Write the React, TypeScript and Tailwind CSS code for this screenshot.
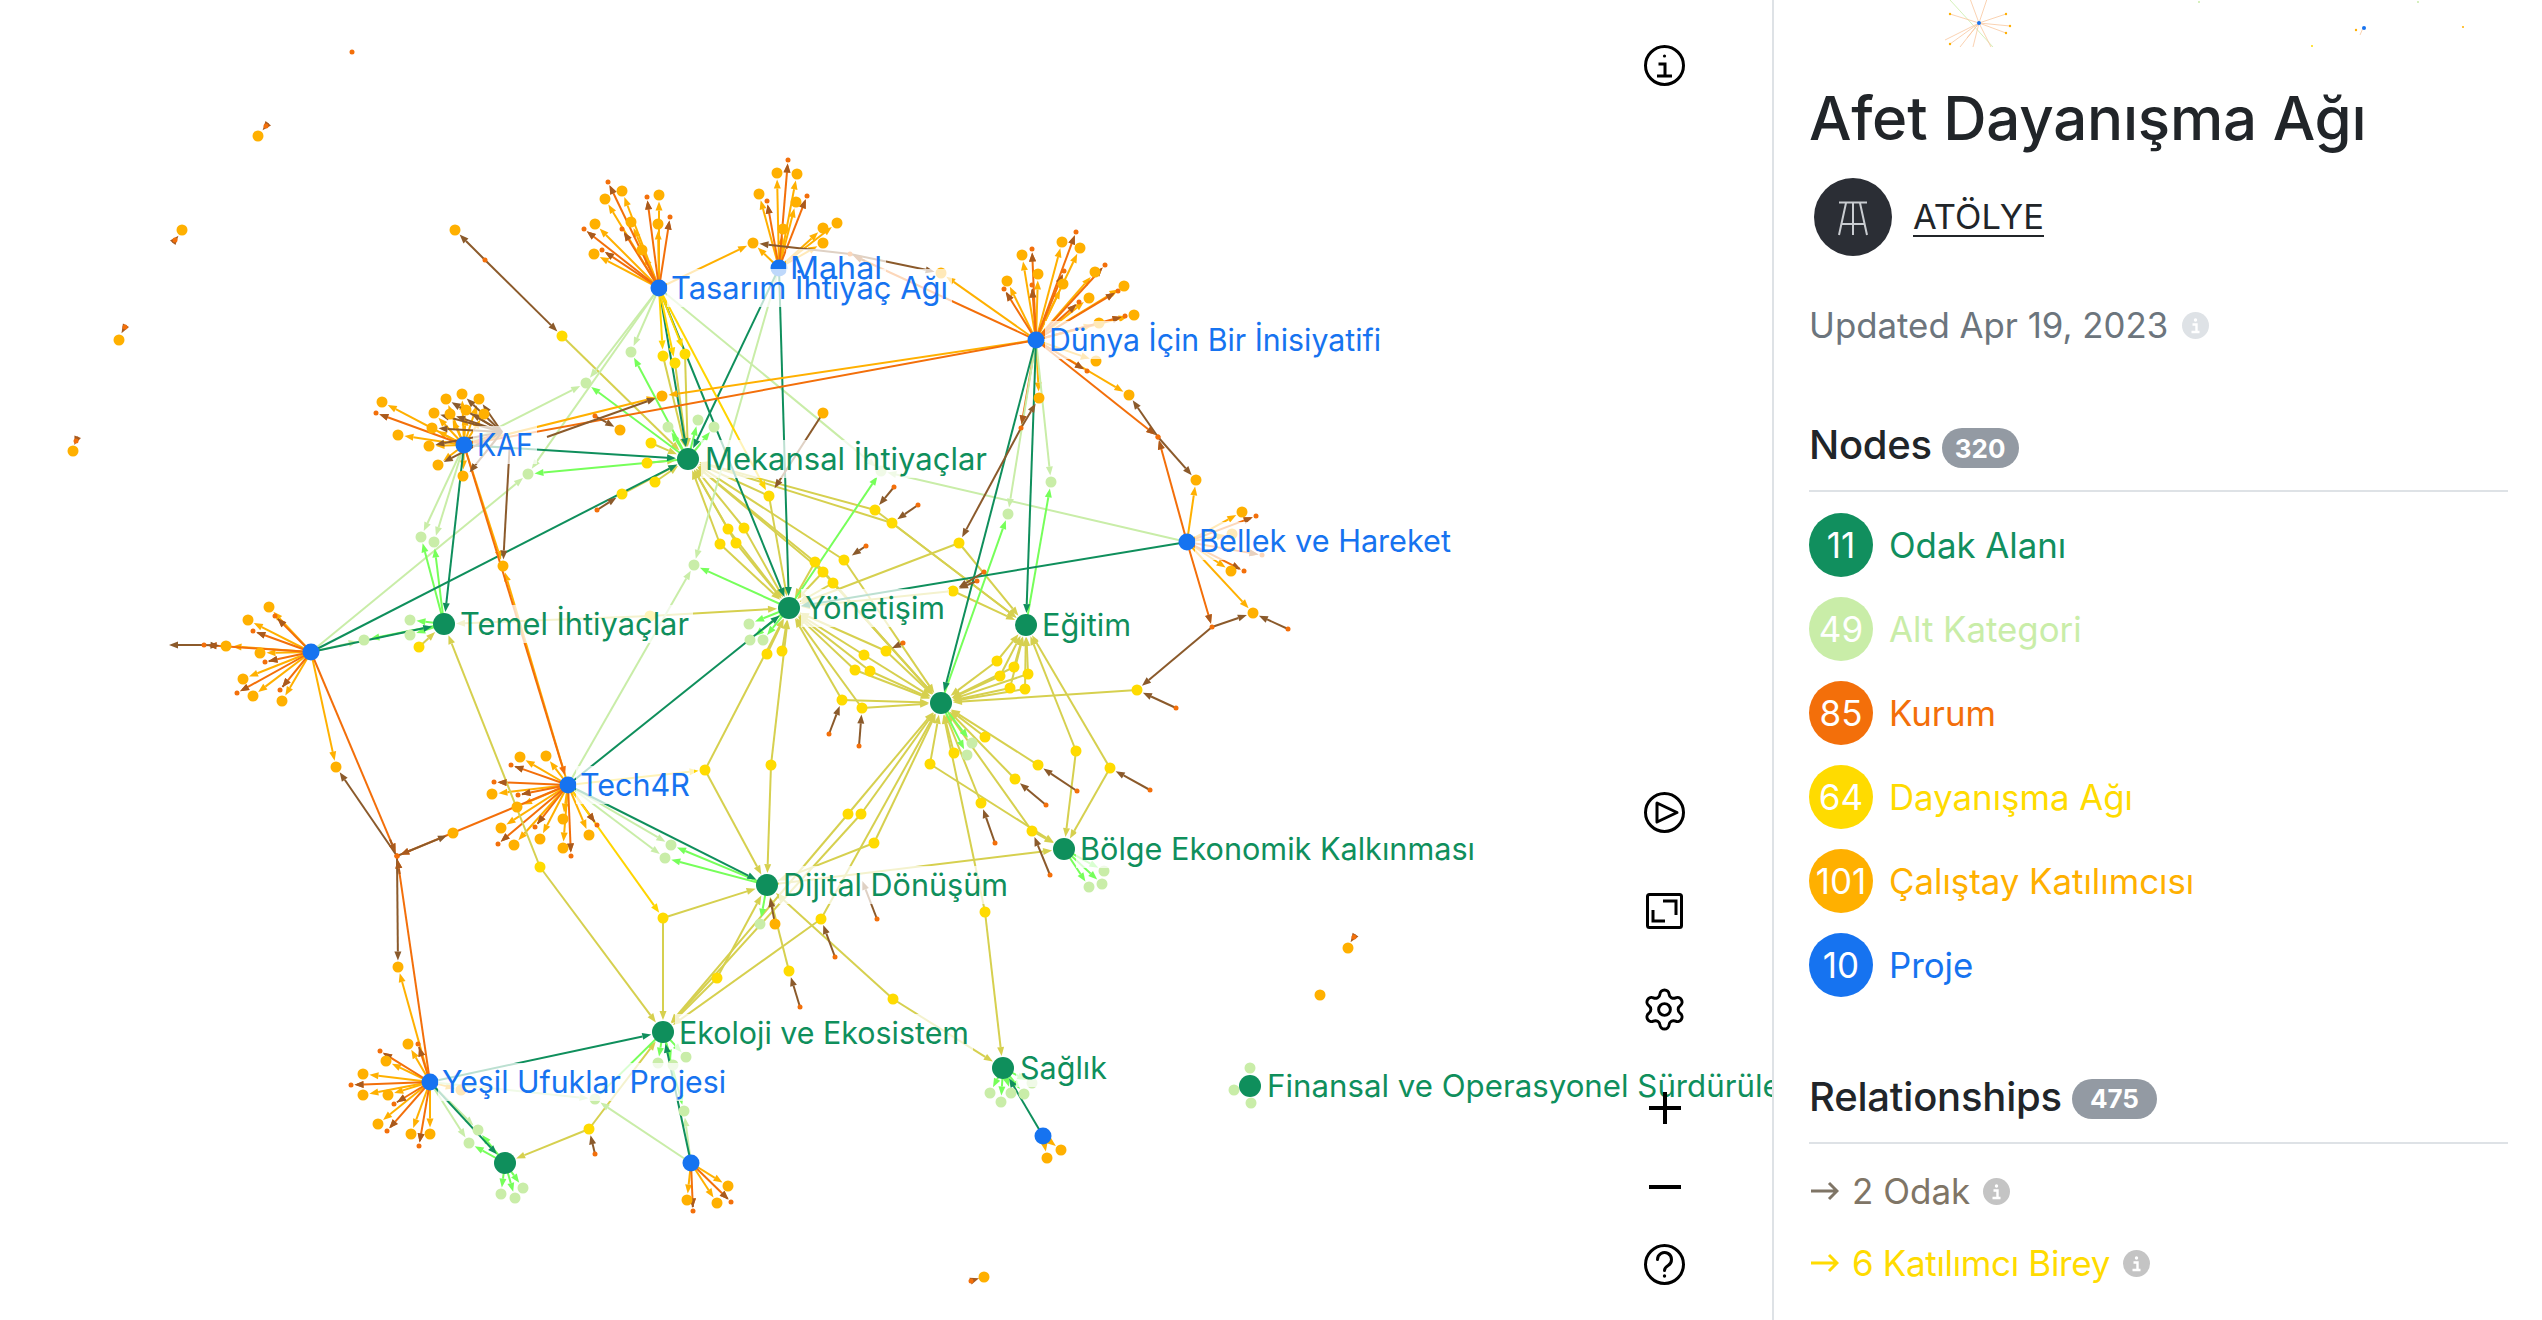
import React from "react";
import { Settings } from "lucide-react";

type P = [number, number];

const AMBER = "#ffb000";
const ORANGE = "#f36f0a";
const BROWN = "#8b5a2b";
const TIP = "#a85a1e";
const DARK = "#0f8f5c";
const LIGHT = "#c9eda8";
const BRIGHT = "#76ff5a";
const OLIVE = "#d6d04f";
const YELLOW = "#ffd500";
const BLUE = "#1673f0";

// hubs
const T: P = [659, 288];
const M: P = [779, 268];
const K: P = [464, 445];
const Mk: P = [688, 459];
const Te: P = [444, 624];
const L: P = [311, 652];
const Y: P = [789, 608];
const D: P = [1036, 340];
const B: P = [1187, 542];
const Eg: P = [1026, 625];
const C: P = [941, 703];
const Tc: P = [568, 785];
const Dj: P = [767, 885];
const Bo: P = [1064, 849];
const Ek: P = [663, 1032];
const Ye: P = [430, 1082];
const G2: P = [505, 1163];
const Bl2: P = [691, 1163];
const Sa: P = [1003, 1068];
const Bl3: P = [1043, 1136];
const Fin: P = [1250, 1086];

const blueHubs: P[] = [T, M, K, L, D, B, Tc, Ye, Bl2, Bl3];
const greenHubs: P[] = [Mk, Te, Y, Eg, C, Dj, Bo, Ek, G2, Sa, Fin];

const stars: { hub: P; amber: P[]; tiny: P[] }[] = [
  { hub: T, amber: [[594, 254], [595, 224], [605, 199], [622, 191], [631, 222], [659, 195], [658, 224], [642, 250]], tiny: [[608, 182], [584, 229], [647, 197], [670, 217], [602, 250], [622, 229]] },
  { hub: M, amber: [[753, 243], [759, 194], [777, 173], [797, 174], [796, 202], [783, 229], [823, 228], [837, 223], [823, 243]], tiny: [[788, 160], [767, 201], [807, 196]] },
  { hub: K, amber: [[382, 402], [398, 435], [429, 446], [438, 465], [463, 476], [434, 413], [450, 414], [446, 399], [462, 394], [479, 399], [484, 414], [466, 410], [432, 428]], tiny: [[376, 413]] },
  { hub: L, amber: [[269, 607], [248, 620], [226, 646], [260, 653], [243, 679], [253, 696], [282, 701], [336, 767]], tiny: [[253, 631], [204, 645], [265, 662], [237, 693], [280, 690], [275, 616], [397, 856]] },
  { hub: D, amber: [[1022, 255], [1007, 281], [1038, 274], [1062, 242], [1080, 248], [1063, 284], [1095, 272], [1089, 298], [1124, 286], [1134, 315], [1099, 323], [1096, 361], [1129, 395], [1039, 398]], tiny: [[1032, 249], [1004, 289], [1076, 232], [1032, 285], [1064, 271], [1105, 265], [1079, 302], [1118, 291], [1125, 316], [1087, 371], [1021, 428], [1158, 437], [850, 254]] },
  { hub: B, amber: [[1242, 512], [1232, 534], [1231, 571], [1253, 613], [1196, 480]], tiny: [[1256, 516], [1262, 555], [1244, 571], [1212, 627], [1158, 437]] },
  { hub: Tc, amber: [[520, 757], [546, 756], [492, 794], [517, 807], [501, 828], [514, 845], [540, 839], [563, 819], [563, 848], [589, 835]], tiny: [[511, 765], [494, 782], [518, 795], [498, 844], [535, 827], [571, 856], [597, 825], [397, 856]] },
  { hub: Ye, amber: [[408, 1044], [386, 1061], [363, 1074], [363, 1095], [388, 1095], [378, 1124], [411, 1134], [430, 1134], [461, 1090], [398, 967]], tiny: [[418, 1044], [380, 1051], [351, 1085], [394, 1104], [387, 1131], [419, 1146], [397, 856]] },
  { hub: Bl2, amber: [[728, 1186], [717, 1203], [687, 1200]], tiny: [[731, 1202], [693, 1211]] },
  { hub: Bl3, amber: [[1061, 1150], [1047, 1158]], tiny: [] },
];

// amber nodes that only hang off another link
const extraAmber: P[] = [[455, 230], [662, 396], [620, 430], [823, 413], [503, 566], [453, 833], [775, 924], [258, 136], [182, 230], [119, 340], [73, 451], [1348, 948], [1320, 995], [984, 1277], [941, 273]];
const extraTiny: P[] = [[485, 260], [595, 416], [597, 510], [266, 126], [175, 240], [125, 327], [76, 441], [352, 52], [1354, 937], [971, 1281], [1288, 629], [1176, 708], [894, 487], [918, 505], [903, 643], [984, 572], [977, 581], [866, 546], [1077, 791], [1046, 805], [1150, 790], [995, 843], [1050, 875], [859, 746], [829, 734], [800, 1007], [835, 957], [877, 919], [595, 1154]];

const yellows: [P, P[]][] = [
  [[562, 336], [Mk]],
  [[651, 443], [Mk]],
  [[647, 463], [Mk]],
  [[655, 482], [Mk]],
  [[622, 494], [Mk]],
  [[663, 356], [Mk]],
  [[675, 363], [Mk]],
  [[685, 354], [Mk]],
  [[769, 496], [Mk, Y]],
  [[728, 529], [Mk, Y]],
  [[744, 528], [Mk, Y]],
  [[720, 544], [Mk, Y]],
  [[736, 543], [Mk, Y]],
  [[815, 562], [Mk, Y, C]],
  [[823, 572], [Mk, Y, C]],
  [[833, 583], [Y, C]],
  [[844, 560], [Mk, C]],
  [[875, 510], [Mk, Eg]],
  [[892, 523], [Mk, Eg]],
  [[959, 543], [Y, Eg]],
  [[953, 591], [Y, Eg]],
  [[886, 651], [Y, C]],
  [[864, 655], [Y, C]],
  [[855, 670], [Y, C]],
  [[870, 671], [Y, C]],
  [[842, 700], [Y, C]],
  [[862, 708], [Y, C]],
  [[997, 661], [C, Eg]],
  [[1014, 667], [C, Eg]],
  [[1028, 674], [C, Eg]],
  [[1000, 676], [C, Eg]],
  [[1010, 688], [C, Eg]],
  [[1025, 689], [C, Eg]],
  [[1137, 690], [C]],
  [[1076, 751], [Eg, Bo]],
  [[1110, 768], [Eg, Bo]],
  [[985, 737], [C]],
  [[954, 753], [C]],
  [[930, 764], [C, Bo]],
  [[1038, 765], [C]],
  [[1015, 779], [C]],
  [[981, 803], [C]],
  [[1032, 831], [C, Bo]],
  [[985, 912], [C, Sa]],
  [[893, 999], [Dj, Sa]],
  [[767, 654], [Y]],
  [[782, 651], [Y]],
  [[771, 765], [Y, Dj]],
  [[705, 770], [Y, Dj]],
  [[650, 616], [Te, Y]],
  [[663, 918], [Dj, Ek]],
  [[540, 867], [Te, Ek]],
  [[419, 647], [Te]],
  [[717, 978], [Dj, Ek]],
  [[789, 971], [Dj]],
  [[821, 919], [Ek, C]],
  [[848, 814], [Ek, C]],
  [[861, 814], [Ek, C]],
  [[874, 843], [Dj, C]],
  [[589, 1129], [G2, Ek]],
];

const lights: [P, P[], P[]][] = [
  [[631, 352], [T], [Mk]],
  [[586, 383], [K, T], [Mk]],
  [[668, 427], [], [Mk]],
  [[698, 420], [], [Mk]],
  [[714, 427], [], [Mk]],
  [[528, 474], [T, L], [Mk]],
  [[421, 537], [K], [Te]],
  [[434, 542], [K], [Te]],
  [[364, 640], [L], [Te]],
  [[410, 620], [], [Te]],
  [[410, 635], [], [Te]],
  [[694, 565], [M, Tc], [Y]],
  [[881, 471], [B, T], [Y]],
  [[749, 624], [], [Y]],
  [[750, 640], [], [Y]],
  [[763, 640], [], [Y]],
  [[1051, 482], [D], [Eg]],
  [[1008, 514], [D], [C]],
  [[972, 743], [], [C]],
  [[967, 755], [], [C]],
  [[671, 845], [Tc], [Dj]],
  [[665, 858], [Tc], [Dj]],
  [[760, 924], [], [Dj]],
  [[686, 1057], [], [Ek]],
  [[658, 1063], [], [Ek]],
  [[673, 1065], [], [Ek]],
  [[684, 1111], [Bl2], [Ek]],
  [[595, 1099], [Ye, Bl2], [Ek]],
  [[478, 1130], [Ye], [G2]],
  [[469, 1143], [Ye], [G2]],
  [[501, 1194], [], [G2]],
  [[515, 1198], [], [G2]],
  [[523, 1188], [], [G2]],
  [[1104, 871], [], [Bo]],
  [[1102, 884], [], [Bo]],
  [[1089, 887], [], [Bo]],
  [[990, 1093], [], [Sa]],
  [[1011, 1093], [], [Sa]],
  [[1024, 1094], [], [Sa]],
  [[1001, 1102], [], [Sa]],
  [[1032, 1083], [], [Sa]],
  [[1250, 1068], [], [Fin]],
  [[1251, 1103], [], [Fin]],
  [[1234, 1090], [], [Fin]],
];

const straight: [P, P, string][] = [
  // project -> focus
  [T, Mk, DARK], [T, Y, DARK], [M, Mk, DARK], [M, Y, DARK], [K, Mk, DARK], [K, Te, DARK], [L, Mk, DARK], [L, Te, DARK],
  [D, C, DARK], [D, Eg, DARK], [B, Y, DARK], [Tc, Y, DARK], [Tc, Dj, DARK], [Ye, Ek, DARK], [Ye, G2, DARK], [Bl2, Ek, DARK], [Bl3, Sa, DARK],
  // project -> network / participant
  [T, [663, 356], YELLOW], [T, [675, 363], YELLOW], [T, [685, 354], YELLOW], [T, [769, 496], YELLOW],
  [T, [753, 243], AMBER], [D, [941, 273], AMBER], [D, [662, 396], AMBER], [K, [662, 396], AMBER],
  [K, [503, 566], AMBER], [Tc, [503, 566], AMBER], [Tc, [663, 918], YELLOW], [Tc, [705, 770], YELLOW],
  [D, K, ORANGE], [K, Tc, ORANGE], [Dj, Bo, OLIVE],
  // tiny connectors
  [[485, 260], [455, 230], BROWN], [[485, 260], [562, 336], BROWN],
  [K, [502, 432], ORANGE],
  [[502, 432], [446, 399], BROWN], [[502, 432], [462, 394], BROWN], [[502, 432], [479, 399], BROWN], [[502, 432], [434, 413], BROWN], [[502, 432], [450, 414], BROWN],
  [[502, 432], [466, 410], BROWN], [[502, 432], [432, 428], BROWN], [[502, 432], [429, 446], BROWN], [[502, 432], [438, 465], BROWN], [[502, 432], [469, 473], BROWN],
  [[547, 437], [662, 396], BROWN], [[595, 416], [620, 430], BROWN], [[597, 510], [622, 494], BROWN],
  [[510, 440], [503, 566], BROWN], [[823, 413], [774, 489], BROWN],
  [[850, 254], [753, 243], BROWN], [[850, 254], [941, 273], BROWN],
  [[1021, 428], [1039, 398], BROWN], [[1021, 428], [959, 543], BROWN],
  [[1158, 437], [1129, 395], BROWN], [[1158, 437], [1196, 480], BROWN],
  [[1212, 627], [1253, 613], BROWN], [[1212, 627], [1137, 690], BROWN], [[1288, 629], [1253, 613], BROWN], [[1176, 708], [1137, 690], BROWN],
  [[397, 856], [336, 767], BROWN], [[397, 856], [453, 833], BROWN], [[397, 856], [398, 967], BROWN],
  [[204, 645], [168, 645], BROWN], [[204, 645], [226, 646], BROWN],
  [[894, 487], [875, 510], BROWN], [[918, 505], [892, 523], BROWN], [[903, 643], [886, 651], BROWN], [[984, 572], [953, 591], BROWN], [[977, 581], [953, 591], BROWN], [[866, 546], [851, 556], BROWN],
  [[1077, 791], [1038, 765], BROWN], [[1046, 805], [1015, 779], BROWN], [[1150, 790], [1110, 768], BROWN], [[995, 843], [981, 803], BROWN], [[1050, 875], [1032, 831], BROWN],
  [[859, 746], [862, 708], BROWN], [[829, 734], [842, 700], BROWN], [[800, 1007], [789, 971], BROWN], [[835, 957], [821, 919], BROWN], [[877, 919], [862, 880], BROWN], [[775, 924], [770, 897], BROWN],
  [[595, 1154], [589, 1129], BROWN],
  [[266, 126], [262, 131], TIP], [[175, 240], [179, 235], TIP], [[125, 327], [121, 334], TIP], [[76, 441], [74, 446], TIP], [[1354, 937], [1350, 943], TIP], [[971, 1281], [980, 1278], TIP],
];

const labels: [string, number, number, number, string][] = [
  ["Tasarım İhtiyaç Ağı", 671, 288, 277, BLUE],
  ["Mahal", 790, 268, 92, BLUE],
  ["KAF", 477, 445, 56, BLUE],
  ["Mekansal İhtiyaçlar", 705, 459, 282, DARK],
  ["Temel İhtiyaçlar", 460, 624, 229, DARK],
  ["Yönetişim", 805, 608, 140, DARK],
  ["Dünya İçin Bir İnisiyatifi", 1049, 340, 332, BLUE],
  ["Bellek ve Hareket", 1199, 541, 252, BLUE],
  ["Eğitim", 1042, 625, 89, DARK],
  ["Tech4R", 580, 785, 110, BLUE],
  ["Dijital Dönüşüm", 783, 885, 225, DARK],
  ["Bölge Ekonomik Kalkınması", 1080, 849, 395, DARK],
  ["Ekoloji ve Ekosistem", 679, 1033, 290, DARK],
  ["Yeşil Ufuklar Projesi", 442, 1082, 284, BLUE],
  ["Sağlık", 1020, 1068, 87, DARK],
  ["Finansal ve Operasyonel Sürdürülebilirlik", 1267, 1086, 600, DARK],
];

const key = (p: P) => `${p[0]},${p[1]}`;
const radius = new Map<string, number>();
blueHubs.forEach((p) => radius.set(key(p), 9));
greenHubs.forEach((p) => radius.set(key(p), 11));
stars.forEach((s) => {
  s.amber.forEach((p) => radius.set(key(p), 5.5));
  s.tiny.forEach((p) => radius.set(key(p), 2.5));
});
extraAmber.forEach((p) => radius.set(key(p), 5.5));
extraTiny.forEach((p) => radius.set(key(p), 2.5));
yellows.forEach(([p]) => radius.set(key(p), 5.5));
lights.forEach(([p]) => radius.set(key(p), 5.5));

function Edge({ from, to, color }: { from: P; to: P; color: string }) {
  const dx = to[0] - from[0];
  const dy = to[1] - from[1];
  const len = Math.hypot(dx, dy) || 1;
  const ux = dx / len;
  const uy = dy / len;
  const gap = (radius.get(key(to)) ?? 0) + 1;
  const tx = to[0] - ux * gap;
  const ty = to[1] - uy * gap;
  const bx = tx - ux * 9;
  const by = ty - uy * 9;
  const arrow = `${tx},${ty} ${bx - uy * 3.5},${by + ux * 3.5} ${bx + uy * 3.5},${by - ux * 3.5}`;
  return (
    <g>
      <line x1={from[0]} y1={from[1]} x2={bx} y2={by} stroke={color} strokeWidth={2} />
      <polygon points={arrow} fill={color} />
    </g>
  );
}

function Graph() {
  const all: [P, P, string][] = [];
  stars.forEach((s) => {
    s.amber.forEach((p) => all.push([s.hub, p, AMBER]));
    s.tiny.forEach((p) => all.push([s.hub, p, ORANGE]));
  });
  yellows.forEach(([p, targets]) => targets.forEach((t) => all.push([p, t, OLIVE])));
  lights.forEach(([p, light, bright]) => {
    light.forEach((f) => all.push([f, p, LIGHT]));
    bright.forEach((f) => all.push([f, p, BRIGHT]));
  });
  all.push(...straight);

  const tipArrows: [P, P][] = [];
  stars.forEach((s) => s.tiny.forEach((p) => tipArrows.push([s.hub, p])));

  return (
    <svg className="absolute left-0 top-0" width={1772} height={1320} viewBox="0 0 1772 1320">
      {all.map(([a, b, c], i) => (
        <Edge key={i} from={a} to={b} color={c} />
      ))}
      {tipArrows.map(([a, b], i) => (
        <Edge key={i} from={[b[0] - (b[0] - a[0]) * 0.08, b[1] - (b[1] - a[1]) * 0.08]} to={b} color={TIP} />
      ))}
      {extraTiny.concat(stars.flatMap((s) => s.tiny)).map((p, i) => (
        <circle key={i} cx={p[0]} cy={p[1]} r={2.5} fill={ORANGE} />
      ))}
      {extraAmber.concat(stars.flatMap((s) => s.amber)).map((p, i) => (
        <circle key={i} cx={p[0]} cy={p[1]} r={5.5} fill={AMBER} />
      ))}
      {yellows.map(([p], i) => (
        <circle key={i} cx={p[0]} cy={p[1]} r={5.5} fill="#ffdb00" />
      ))}
      {lights.map(([p], i) => (
        <circle key={i} cx={p[0]} cy={p[1]} r={5.5} fill={LIGHT} />
      ))}
      {blueHubs.map((p, i) => (
        <circle key={i} cx={p[0]} cy={p[1]} r={8.5} fill={BLUE} />
      ))}
      {greenHubs.map((p, i) => (
        <circle key={i} cx={p[0]} cy={p[1]} r={11} fill={DARK} />
      ))}
      {labels.map(([t, x, y, w], i) => (
        <rect key={i} x={x - 4} y={y - 19} width={w + 8} height={38} fill="white" fillOpacity={0.72} />
      ))}
      {labels.map(([t, x, y, w, c], i) => (
        <text
          key={i}
          x={x}
          y={y + 11}
          fill={c}
          fontSize={31}
          fontFamily="Inter, sans-serif"
          textLength={w}
          lengthAdjust="spacingAndGlyphs"
        >
          {t}
        </text>
      ))}
    </svg>
  );
}

function CircleIcon({ children }: { children: React.ReactNode }) {
  return (
    <svg width={41} height={41} viewBox="0 0 41 41" fill="none" stroke="black" strokeWidth={3} strokeLinecap="round" strokeLinejoin="round">
      <circle cx={20.5} cy={20.5} r={19} />
      {children}
    </svg>
  );
}

function Toolbar() {
  return (
    <div className="relative mr-[87px] flex h-full w-[41px] flex-col items-center pt-[45px] pb-[35px]">
      <CircleIcon>
        <path d="M16 19h5v11M14.5 31h12" strokeLinecap="square" strokeLinejoin="miter" />
        <circle cx={20.5} cy={11} r={1.6} fill="black" stroke="none" />
      </CircleIcon>
      <div className="mt-auto flex flex-col items-center gap-[60px]">
        <CircleIcon>
          <path d="M13 11l20 9.5L13 30z" />
        </CircleIcon>
        <svg width={37} height={36} viewBox="0 0 37 36" fill="none" stroke="black" strokeWidth={3}>
          <rect x={1.5} y={1.5} width={34} height={33} rx={2} />
          <path d="M17 8h13v14M7 17v11h12" />
        </svg>
        <Settings size={47} strokeWidth={1.5} color="black" className="-my-[3px]" />
      </div>
      <div className="mt-[62px] flex flex-col items-center">
        <svg width={32} height={32} viewBox="0 0 32 32" fill="none" stroke="black" strokeWidth={4} className="mb-[47px]">
          <path d="M0 16h32M16 0v32" />
        </svg>
        <svg width={32} height={32} viewBox="0 0 32 32" fill="none" stroke="black" strokeWidth={4} className="mb-[41px]">
          <path d="M0 16h32" />
        </svg>
        <CircleIcon>
          <path d="M13.5 15.5a7 7 0 1 1 10.6 6c-2.2 1.4-3.6 2.5-3.6 5" />
          <circle cx={20.5} cy={32} r={1.7} fill="black" stroke="none" />
        </CircleIcon>
      </div>
    </div>
  );
}

function InfoDot({ color }: { color: string }) {
  return (
    <svg width={27} height={27} viewBox="0 0 27 27" className="shrink-0">
      <circle cx={13.5} cy={13.5} r={13.5} fill={color} />
      <path d="M10.5 12.5h4v7M9.5 20h8" stroke="white" strokeWidth={2.4} fill="none" />
      <circle cx={13.5} cy={8} r={1.7} fill="white" />
    </svg>
  );
}

function Thumbnail() {
  const hub: P = [205, 23];
  const spokes: P[] = [[176, 14], [176, 44], [232, 14], [236, 26], [232, 33], [193, 38], [171, 40], [195, -4], [214, -4], [217, 47], [199, 47], [186, 47]];
  return (
    <svg width={767} height={47} viewBox="0 0 767 47" className="block">
      <line x1={176} y1={0} x2={219} y2={47} stroke="#c9eda8" strokeWidth={0.8} />
      {spokes.map((p, i) => (
        <line key={i} x1={hub[0]} y1={hub[1]} x2={p[0]} y2={p[1]} stroke="#f9c79e" strokeWidth={0.8} />
      ))}
      {spokes.slice(0, 5).map((p, i) => (
        <circle key={i} cx={p[0]} cy={p[1]} r={1.2} fill={AMBER} />
      ))}
      <circle cx={205} cy={23} r={2} fill={BLUE} />
      <line x1={589} y1={28} x2={586} y2={35} stroke="#f9c79e" strokeWidth={0.8} />
      <circle cx={590} cy={28} r={2} fill={BLUE} />
      <circle cx={582} cy={30} r={1.2} fill={AMBER} />
      <circle cx={689} cy={27} r={1} fill={AMBER} />
      <circle cx={538} cy={46} r={1} fill="#ffdb00" />
      <circle cx={425} cy={2} r={1} fill={LIGHT} />
      <circle cx={644} cy={2} r={1} fill={LIGHT} />
    </svg>
  );
}

function Badge({ n, w }: { n: number; w: string }) {
  return <span className={`flex h-[40px] items-center justify-center rounded-full bg-[#939aa3] text-[26px] font-bold text-white ${w}`}>{n}</span>;
}

const types: [number, string, string, string][] = [
  [11, "Odak Alanı", "bg-[#118f5e]", "text-[#118f5e]"],
  [49, "Alt Kategori", "bg-[#c9eda8]", "text-[#c9eda8]"],
  [85, "Kurum", "bg-[#f36f0a]", "text-[#f36f0a]"],
  [64, "Dayanışma Ağı", "bg-[#ffdb00]", "text-[#ffdb00]"],
  [101, "Çalıştay Katılımcısı", "bg-[#ffb000]", "text-[#ffb000]"],
  [10, "Proje", "bg-[#1673f0]", "text-[#1673f0]"],
];

function RelArrow({ color }: { color: string }) {
  return (
    <svg width={30} height={20} viewBox="0 0 30 20" fill="none" stroke={color} strokeWidth={3} className="shrink-0">
      <path d="M2 10h26M20 2l8 8-8 8" />
    </svg>
  );
}

function Sidebar() {
  return (
    <aside className="h-full w-[770px] shrink-0 overflow-hidden border-l-2 border-[#dee2e6] bg-white">
      <Thumbnail />
      <div className="pl-[35px] pr-[34px]">
        <h1 className="mt-[35px] text-[60px] font-medium leading-[72px] tracking-[-0.2px] text-[#212529]">Afet Dayanışma Ağı</h1>
        <div className="mt-[24px] flex items-center gap-[21px] pl-[5px]">
          <div className="h-[78px] w-[78px] shrink-0 rounded-full bg-[#2b2e35]">
            <svg width={78} height={78} viewBox="0 0 78 78" fill="none" stroke="#c9ccd1" strokeWidth={2}>
              <path d="M25 24.5h28M32 25l-7 32M46 25l7 32M39 25v32M27 46h24" />
            </svg>
          </div>
          <a className="text-[34.5px] leading-[42px] text-[#212529] underline decoration-2 underline-offset-[6px]">ATÖLYE</a>
        </div>
        <div className="mt-[47px] flex items-center gap-[14px] text-[34.8px] leading-[44px] text-[#6c757d]">
          <span>Updated Apr 19, 2023</span>
          <InfoDot color="#dee2e6" />
        </div>

        <div className="mt-[74px] flex items-center gap-[10px] border-b-2 border-[#dee2e6] pb-[21px]">
          <h2 className="text-[40px] font-medium leading-[48px] tracking-[-0.3px] text-[#212529]">Nodes</h2>
          <div className="mt-[6px]">
            <Badge n={320} w="w-[77px]" />
          </div>
        </div>
        <ul className="mt-[21px] flex flex-col gap-[20px]">
          {types.map(([n, name, bg, fg]) => (
            <li key={name} className="flex items-center gap-[16px]">
              <span className={`flex h-[64px] w-[64px] items-center justify-center rounded-full text-[35px] text-white ${bg}`}>{n}</span>
              <span className={`text-[34.8px] leading-[44px] ${fg}`}>{name}</span>
            </li>
          ))}
        </ul>

        <div className="mt-[76px] flex items-center gap-[10px] border-b-2 border-[#dee2e6] pb-[21px]">
          <h2 className="text-[40px] font-medium leading-[48px] tracking-[-0.2px] text-[#212529]">Relationships</h2>
          <div className="mt-[3px]">
            <Badge n={475} w="w-[85px]" />
          </div>
        </div>
        <ul className="mt-[25px] flex flex-col gap-[28px]">
          <li className="flex items-center text-[35px] leading-[44px] text-[#7f7566]">
            <RelArrow color="#7f7566" />
            <span className="ml-[13px] mr-[13px]">2 Odak</span>
            <InfoDot color="#c4c4c4" />
          </li>
          <li className="flex items-center text-[35px] leading-[44px] text-[#ffdb00]">
            <RelArrow color="#ffdb00" />
            <span className="ml-[13px] mr-[13px] tracking-[-0.35px]">6 Katılımcı Birey</span>
            <InfoDot color="#c4c4c4" />
          </li>
        </ul>
      </div>
    </aside>
  );
}

export default function App() {
  return (
    <div className="flex h-[1320px] w-[2542px] overflow-hidden bg-white font-['Inter',sans-serif]">
      <main className="relative flex h-full flex-1 justify-end overflow-hidden">
        <Graph />
        <Toolbar />
      </main>
      <Sidebar />
    </div>
  );
}
